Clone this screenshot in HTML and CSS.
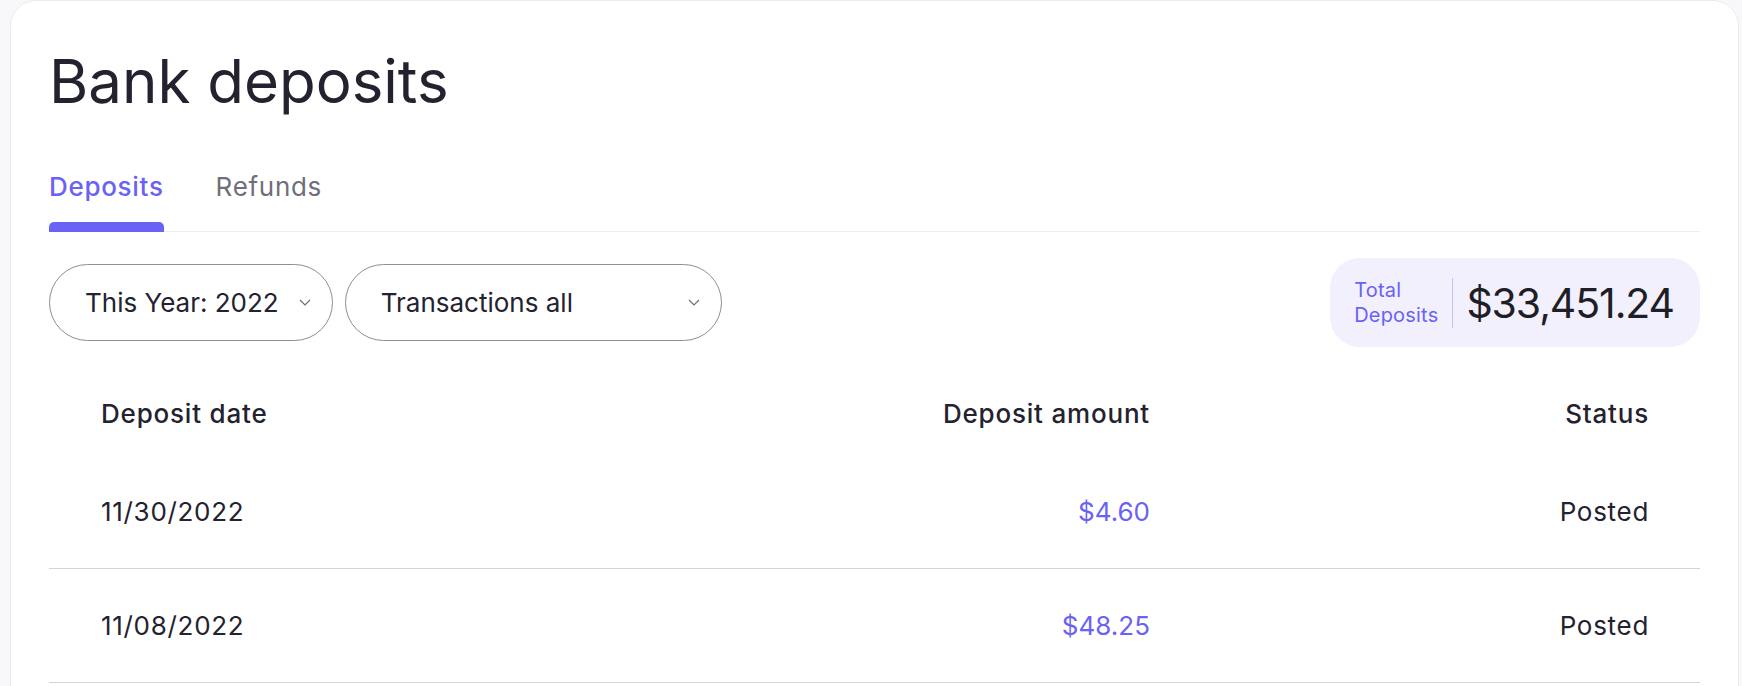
FILE: index.html
```html
<!DOCTYPE html>
<html lang="en">
<head>
    <meta charset="UTF-8">
    <meta name="viewport" content="width=device-width, initial-scale=1.0">
    <title>Bank deposits</title>
    <link rel="stylesheet" href="styles.css">
</head>
<body>
    <div class="card">
        <h1 class="title">Bank deposits</h1>

        <div class="tabs">
            <a class="tab on">Deposits</a>
            <a class="tab">Refunds</a>
        </div>

        <div class="filters">
            <button class="select select-year">
                <span>This Year: 2022</span>
                <svg width="12" height="7" viewBox="0 0 12 7"><polyline points="1,1 6,6 11,1" /></svg>
            </button>
            <button class="select select-type">
                <span>Transactions all</span>
                <svg width="12" height="7" viewBox="0 0 12 7"><polyline points="1,1 6,6 11,1" /></svg>
            </button>

            <div class="total">
                <div class="total-label">Total<br>Deposits</div>
                <div class="total-line"></div>
                <div class="total-amount">$33,451.24</div>
            </div>
        </div>

        <div class="table">
            <div class="row head">
                <div>Deposit date</div>
                <div class="num">Deposit amount</div>
                <div class="num">Status</div>
            </div>
            <div class="row">
                <div>11/30/2022</div>
                <div class="num amount">$4.60</div>
                <div class="num">Posted</div>
            </div>
            <div class="row">
                <div>11/08/2022</div>
                <div class="num amount">$48.25</div>
                <div class="num">Posted</div>
            </div>
        </div>
    </div>
</body>
</html>
```

FILE: styles.css
```css
*{box-sizing:border-box}
body{
    margin:0;
    padding:0 3px 0 10px;
    background:#f8f8fa;
    font-family:Inter, "Noto Sans", sans-serif;
    color:#24222f;
    overflow:hidden;
}

.card{
    background:#fff;
    border:1px solid #ebebef;
    border-radius:26px;
    padding:45px 38px 40px;
    min-height:700px;
}

.title{
    margin:0;
    font-size:60px;
    line-height:70px;
    font-weight:400;
    letter-spacing:0;
}

.tabs{
    display:flex;
    gap:52px;
    margin-top:55px;
    border-bottom:1px solid #eeeef1;
}
.tab{
    position:relative;
    font-size:26px;
    line-height:32px;
    padding-bottom:28px;
    color:#6f6e7a;
    letter-spacing:0.7px;
    cursor:pointer;
}
.tab.on{color:#6a62f5;font-weight:500}
.tab.on::after{
    content:"";
    position:absolute;
    left:0;
    right:0;
    bottom:-1px;
    height:10px;
    background:#6a62f5;
    border-radius:5px 5px 0 0;
}

.filters{
    display:flex;
    align-items:center;
    gap:12px;
    margin-top:26px;
}
.select{
    display:flex;
    align-items:center;
    justify-content:space-between;
    gap:20px;
    height:77px;
    padding:0 21px 0 35px;
    border:1px solid #8e8e94;
    border-radius:40px;
    background:#fff;
    font-family:inherit;
    font-size:26px;
    color:#24222f;
}
.select-type{width:377px}
.select svg polyline{fill:none;stroke:#6e6d78;stroke-width:1.2}

.total{
    margin-left:auto;
    display:flex;
    align-items:center;
    height:89px;
    padding:0 26px 0 24px;
    background:#f2f0fd;
    border-radius:30px;
}
.total-label{
    font-size:20px;
    line-height:25px;
    color:#6a62f5;
    letter-spacing:0.2px;
}
.total-line{
    width:1px;
    height:50px;
    background:#c6c2f4;
    margin:0 13px 0 14px;
}
.total-amount{
    font-size:41px;
    color:#1f1e26;
    letter-spacing:-1.1px;
}

.table{margin-top:25px}
.row{
    display:grid;
    grid-template-columns:1fr 400px 499px;
    align-items:center;
    height:114px;
    padding:0 51px 0 52px;
    border-bottom:1px solid #d4d4d8;
    font-size:26px;
    letter-spacing:0.7px;
}
.row.head{
    height:83px;
    border-bottom:0;
    font-weight:500;
    letter-spacing:0.8px;
}
.num{text-align:right}
.amount{color:#6a62f5;letter-spacing:0}
```
